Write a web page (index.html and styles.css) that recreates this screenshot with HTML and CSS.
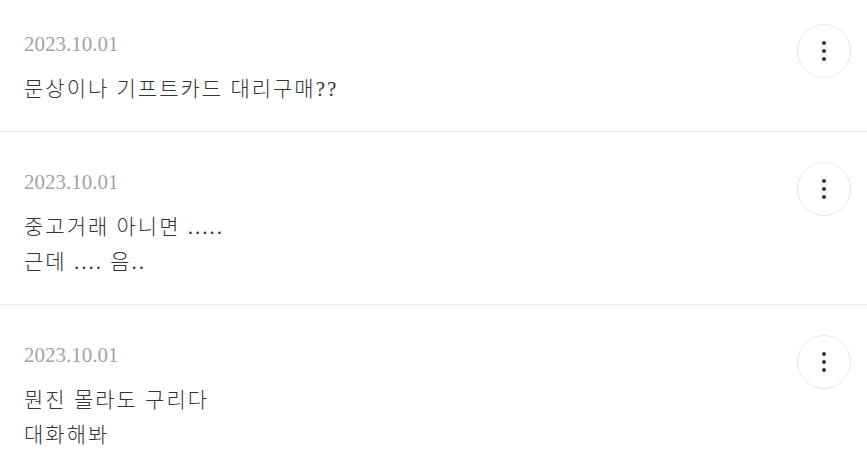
FILE: index.html
```html
<!doctype html>
<html>
<head>
<meta charset="utf-8">
<title>댓글</title>
<link rel="stylesheet" href="styles.css">
</head>

<body>
<ul class="list">
	<li class="post">
		<div class="post-body">
			<p class="date">2023.10.01</p>
			<p class="text">문상이나 기프트카드 대리구매??</p>
		</div>
		<button class="more" type="button"><span></span><span></span><span></span></button>
	</li>
	<li class="post">
		<div class="post-body">
			<p class="date">2023.10.01</p>
			<p class="text">중고거래 아니면 .....<br>근데 .... 음..</p>
		</div>
		<button class="more" type="button"><span></span><span></span><span></span></button>
	</li>
	<li class="post">
		<div class="post-body">
			<p class="date">2023.10.01</p>
			<p class="text">뭔진 몰라도 구리다<br>대화해봐</p>
		</div>
		<button class="more" type="button"><span></span><span></span><span></span></button>
	</li>
</ul>
</body>
</html>
```

FILE: styles.css
```css
body {
	margin: 0;
	background: #FFF;
	font: 21px/35px "Liberation Serif", "Noto Sans CJK KR", serif;
	color: #333;
}
ul, li, p {
	margin: 0;
	padding: 0;
}
ul {
	list-style: none;
}
.post {
	display: flex;
	align-items: flex-start;
	padding: 35px 16px 24px 24px;
	border-bottom: 1px solid #EAEAEA;
}
.post:first-child {
	padding-top: 29px;
}
.post:last-child {
	border-bottom: none;
}
.post-body {
	flex: 1;
}
.date {
	line-height: 30px;
	color: #A3A3A3;
	margin-bottom: 13px;
}
.text {
	color: #333;
	font-weight: 300;
	letter-spacing: 2px;
}
.more {
	width: 54px;
	height: 54px;
	margin-top: -5px;
	border: 1px solid #E6E6E6;
	border-radius: 50%;
	background: #FFF;
	padding: 0;
	display: flex;
	flex-direction: column;
	align-items: center;
	justify-content: center;
	gap: 4px;
	cursor: pointer;
}
.more span {
	width: 4px;
	height: 4px;
	border-radius: 50%;
	background: #333;
}
```
